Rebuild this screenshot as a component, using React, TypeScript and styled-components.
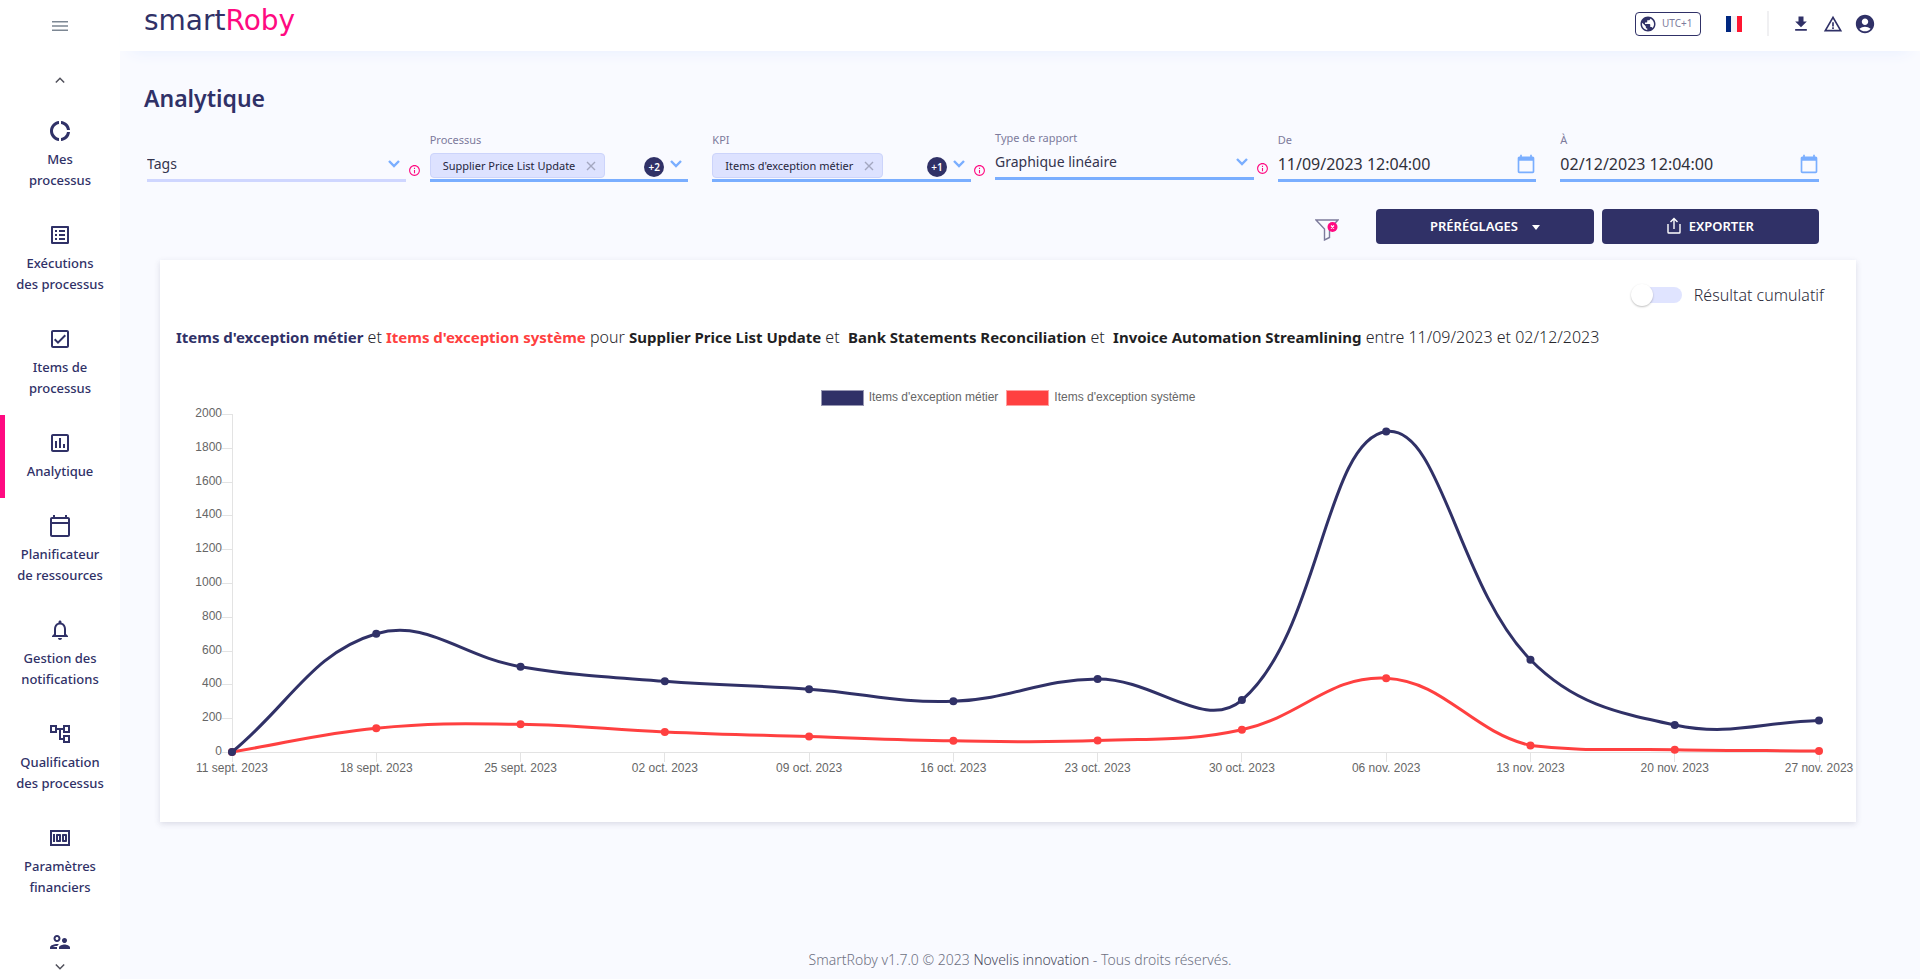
import React, { useLayoutEffect, useRef, useState } from 'react';
import styled, { createGlobalStyle } from 'styled-components';
import {
  MdAccountCircle,
  MdCalendarToday,
  MdDonutLarge,
  MdGetApp,
  MdInfoOutline,
  MdMoney,
  MdNotificationsNone,
  MdOutlineAccountTree,
  MdOutlineCalendarToday,
  MdOutlineCheckBox,
  MdOutlineInsertChartOutlined,
  MdOutlineListAlt,
  MdOutlineSupervisorAccount,
  MdPublic,
  MdWarningAmber,
} from 'react-icons/md';

const navy = '#303167';
const pink = '#ff0a81';
const red = '#ff4040';
const blue = '#7aaeff';
const muted = '#7d7b9c';

const GlobalStyle = createGlobalStyle`
  *, *::before, *::after { box-sizing: border-box; }
  body {
    margin: 0;
    background: #f9faff;
    color: #2b2b3a;
    font-family: "Noto Sans", "Open Sans", sans-serif;
    font-size: 14px;
  }
  button, input, select { font: inherit; color: inherit; }
  button { padding: 0; border: 0; background: none; cursor: pointer; }
  a { color: inherit; text-decoration: none; }
`;

const Shell = styled.div`
  display: flex;
  height: 100vh;
`;

const Sidebar = styled.aside`
  flex: none;
  display: flex;
  flex-direction: column;
  align-items: center;
  width: 120px;
  background: #fff;
`;

const MenuButton = styled.button`
  display: flex;
  margin-top: 18px;
  color: #7c8793;
`;

const ScrollButton = styled.button<{ $up?: boolean }>`
  flex: none;
  display: flex;
  align-items: center;
  justify-content: center;
  width: 24px;
  height: 24px;
  margin: ${(p) => (p.$up ? '34px 0 11px' : '0')};
  color: #4f4f5a;
`;

const NavList = styled.ul`
  flex: 1;
  min-height: 0;
  width: 100%;
  margin: 0;
  padding: 0;
  overflow: hidden;
  list-style: none;
`;

const NavLink = styled.a<{ $active?: boolean }>`
  display: flex;
  flex-direction: column;
  align-items: center;
  gap: 6px;
  padding: 16px 0;
  box-shadow: ${(p) => (p.$active ? `inset 5px 0 ${pink}` : 'none')};
  color: ${navy};
  font-size: 13px;
  font-weight: 500;
  line-height: 21px;
  text-align: center;
  white-space: pre-line;
`;

const Page = styled.div`
  flex: 1;
  min-width: 0;
  display: flex;
  flex-direction: column;
`;

const Header = styled.header`
  display: flex;
  align-items: center;
  justify-content: space-between;
  height: 51px;
  padding: 0 43px 4px 24px;
  background: #fff;
  box-shadow: 0 12px 16px -12px #e6eeff;
`;

const Logo = styled.a`
  color: ${navy};
  font-family: "DejaVu Sans", sans-serif;
  font-size: 28px;
  line-height: 32px;
  padding-bottom: 6px;
`;

const LogoAccent = styled.span`
  color: ${pink};
`;

const HeaderTools = styled.div`
  display: flex;
  align-items: center;
  color: ${navy};
`;

const ZoneButton = styled.button`
  display: flex;
  align-items: center;
  gap: 5px;
  height: 24px;
  width: 66px;
  padding: 0 3px;
  border: 1px solid ${navy};
  border-radius: 4px;
  color: ${navy};
`;

const ZoneText = styled.span`
  color: ${muted};
  font-size: 10px;
  line-height: 16px;
  padding-bottom: 2px;
`;

const Flag = styled.button`
  width: 16px;
  height: 16px;
  margin: 0 25px;
  background: linear-gradient(90deg, #002780 0 33%, #f4f4f6 33% 67%, #ff1530 67%);
`;

const Divider = styled.span`
  width: 2px;
  height: 25px;
  margin-right: 20px;
  background: #f0f0f2;
`;

const ToolButton = styled.button`
  display: flex;
  align-items: center;
  justify-content: center;
  width: 24px;
  height: 24px;
  margin-left: 8px;

  &:first-of-type { margin-left: 0; }
`;

const ToolGroup = styled.div`
  display: flex;
`;

const Main = styled.main`
  display: flex;
  flex-direction: column;
  padding-top: 31px;
`;

const Title = styled.h1`
  margin: 0 24px;
  color: ${navy};
  font-size: 23px;
  font-weight: 600;
  line-height: 32px;
`;

const Filters = styled.form`
  display: grid;
  grid-template-columns: repeat(6, minmax(0, 1fr));
  min-height: 52px;
  margin: 16px 77px 0 27px;
`;

const FilterCell = styled.div<{ $raised?: boolean }>`
  display: flex;
  align-self: ${(p) => (p.$raised ? 'start' : 'end')};
  align-items: flex-end;
`;

const Field = styled.div<{ $empty?: boolean }>`
  flex: 1;
  min-width: 0;
  border-bottom: 3px solid ${(p) => (p.$empty ? '#cfd6ff' : blue)};
`;

const FieldLabel = styled.label`
  display: block;
  height: 16px;
  color: ${muted};
  font-size: 11px;
  line-height: 16px;
`;

const FieldBody = styled.div`
  display: flex;
  align-items: center;
  height: 31px;
  padding-right: 6px;
  color: ${blue};
`;

const SelectInput = styled.select`
  flex: 1;
  min-width: 0;
  padding: 0;
  border: 0;
  appearance: none;
  background: none;
  color: #34344e;
  font-size: 14px;
`;

const DateInput = styled.input`
  flex: 1;
  min-width: 0;
  padding: 0;
  border: 0;
  background: none;
  color: #30303a;
  font-size: 16px;
`;

const DateBody = styled(FieldBody)`
  padding-right: 0;
`;

const IconButton = styled.button`
  display: flex;
  color: inherit;
`;

const Chip = styled.span`
  display: flex;
  align-items: center;
  gap: 11px;
  height: 25px;
  margin: 4px auto 0 0;
  padding: 0 8px 0 12px;
  border: 1px solid #ccd4fb;
  border-radius: 4px;
  background: #dde2ff;
  color: #25253c;
  font-size: 11px;
  white-space: nowrap;
`;

const ChipRemove = styled.button`
  display: flex;
  color: #a3a7c0;
`;

const Count = styled.span`
  display: flex;
  align-items: center;
  justify-content: center;
  width: 20px;
  height: 20px;
  margin: 6px 6px 0 0;
  border-radius: 50%;
  background: ${navy};
  color: #fff;
  font-size: 10px;
  font-weight: 600;
`;

const InfoSlot = styled.span`
  flex: none;
  display: flex;
  justify-content: center;
  width: 24px;
  padding: 0 6px 5px 0;
  color: ${pink};
`;

const Actions = styled.div`
  display: flex;
  justify-content: flex-end;
  align-items: center;
  gap: 8px;
  margin: 27px 101px 0 27px;
`;

const ClearFilters = styled.button`
  display: flex;
  margin: 6px 29px 0 0;
`;

const ActionButton = styled.button`
  display: flex;
  align-items: center;
  justify-content: center;
  gap: 8px;
  flex: 0 0 13%;
  height: 35px;
  padding-bottom: 2px;
  border-radius: 4px;
  background: ${navy};
  color: #fff;
  font-size: 13px;
  font-weight: 600;
  line-height: 20px;
`;

const Caret = styled.span`
  margin: 4px 0 0 6px;
  border: 4px solid transparent;
  border-top: 5px solid #fff;
  border-bottom: 0;
`;

const Card = styled.section`
  margin: 16px 64px 0 40px;
  padding: 24px 0 40px;
  background: #fff;
  box-shadow: 0 2px 6px rgba(60, 60, 100, 0.16);
`;

const ToggleLabel = styled.label`
  display: flex;
  align-items: center;
  justify-content: flex-end;
  gap: 12px;
  height: 22px;
  padding-right: 32px;
  font-size: 16px;
  font-weight: 300;
  line-height: 22px;
`;

const Toggle = styled.input`
  position: relative;
  width: 46px;
  height: 16px;
  margin: 0;
  appearance: none;
  border-radius: 8px;
  background: #e0e4ff;

  &::before {
    content: "";
    position: absolute;
    top: -3px;
    left: -5px;
    width: 22px;
    height: 22px;
    border-radius: 50%;
    background: #fff;
    box-shadow: 0 1px 2px rgba(0, 0, 0, 0.25);
  }

  &:checked::before { left: 29px; }
`;

const Summary = styled.p`
  margin: 19px 16px 0;
  color: #26262c;
  font-size: 16px;
  font-weight: 300;
  line-height: 24px;
  white-space: pre-wrap;
`;

const Strong = styled.strong<{ $color?: string }>`
  color: ${(p) => p.$color ?? '#1f1f24'};
  font-size: 15px;
  font-weight: 700;
`;

const Legend = styled.div`
  display: flex;
  justify-content: center;
  gap: 8px;
  margin-top: 41px;
  color: #666;
  font-family: "Liberation Sans", Arial, sans-serif;
  font-size: 12px;
  line-height: 14px;
`;

const LegendItem = styled.span`
  display: flex;
  gap: 5px;
`;

const Swatch = styled.span<{ $color: string }>`
  width: 43px;
  height: 16px;
  border: 1px solid rgba(255, 255, 255, 0.5);
  background: ${(p) => p.$color};
`;

const ChartSvg = styled.svg`
  display: block;
  width: 100%;
  height: 376px;
  font-family: "Liberation Sans", Arial, sans-serif;
  font-size: 12px;
  fill: #666;
`;

const Footer = styled.footer`
  margin-top: auto;
  padding-bottom: 9px;
  color: #6e7182;
  font-size: 14px;
  font-weight: 300;
  line-height: 20px;
  text-align: center;
`;

const FooterLink = styled.a`
  color: #4a4c60;
`;

const navItems = [
  { label: 'Mes\nprocessus', Icon: MdDonutLarge },
  { label: 'Exécutions\ndes processus', Icon: MdOutlineListAlt },
  { label: 'Items de\nprocessus', Icon: MdOutlineCheckBox },
  { label: 'Analytique', Icon: MdOutlineInsertChartOutlined, active: true },
  { label: 'Planificateur\nde ressources', Icon: MdOutlineCalendarToday },
  { label: 'Gestion des\nnotifications', Icon: MdNotificationsNone },
  { label: 'Qualification\ndes processus', Icon: MdOutlineAccountTree },
  { label: 'Paramètres\nfinanciers', Icon: MdMoney },
];

const dates = [
  '11 sept. 2023', '18 sept. 2023', '25 sept. 2023', '02 oct. 2023',
  '09 oct. 2023', '16 oct. 2023', '23 oct. 2023', '30 oct. 2023',
  '06 nov. 2023', '13 nov. 2023', '20 nov. 2023', '27 nov. 2023',
];

const series = [
  {
    name: "Items d'exception système",
    color: red,
    values: [0, 141, 164, 119, 91, 66, 68, 132, 437, 38, 14, 6],
  },
  {
    name: "Items d'exception métier",
    color: navy,
    values: [0, 700, 505, 418, 372, 300, 432, 307, 1896, 546, 160, 187],
  },
];

type Point = { x: number; y: number };

/* Cubic spline through the points; handles follow the neighbours' chord. */
function splinePath(points: Point[], top: number, bottom: number) {
  const tension = 0.4;
  const clamp = (y: number) => Math.min(bottom, Math.max(top, y));
  const handles = points.map((p, i) => {
    const prev = points[i - 1] ?? p;
    const next = points[i + 1] ?? p;
    const before = Math.hypot(p.x - prev.x, p.y - prev.y);
    const after = Math.hypot(next.x - p.x, next.y - p.y);
    const a = (tension * before) / (before + after);
    const b = (tension * after) / (before + after);
    const dx = next.x - prev.x;
    const dy = next.y - prev.y;
    return {
      inX: p.x - a * dx, inY: clamp(p.y - a * dy),
      outX: p.x + b * dx, outY: clamp(p.y + b * dy),
    };
  });
  return points
    .map((p, i) =>
      i === 0
        ? `M${p.x},${p.y}`
        : `C${handles[i - 1].outX},${handles[i - 1].outY} ${handles[i].inX},${handles[i].inY} ${p.x},${p.y}`)
    .join(' ');
}

function LineChart() {
  const ref = useRef<SVGSVGElement>(null);
  const [width, setWidth] = useState(1696);

  useLayoutEffect(() => {
    const node = ref.current;
    if (!node) return;
    const update = () => setWidth(node.getBoundingClientRect().width);
    update();
    const observer = new ResizeObserver(update);
    observer.observe(node);
    return () => observer.disconnect();
  }, []);

  const left = 72;
  const right = width - 37;
  const top = 8;
  const bottom = 346;
  const x = (i: number) => left + ((right - left) * i) / (dates.length - 1);
  const y = (v: number) => bottom - ((bottom - top) * v) / 2000;
  const ticks = Array.from({ length: 11 }, (_, i) => i * 200);

  return (
    <ChartSvg ref={ref} role="img" aria-label="Items d'exception par semaine">
      <g stroke="#e3e3e3" shapeRendering="crispEdges">
        <line x1={left} x2={left} y1={top} y2={bottom + 10} />
        <line x1={left - 10} x2={right} y1={bottom} y2={bottom} />
        {ticks.map((t) => (
          <line key={t} x1={left - 10} x2={left} y1={Math.round(y(t))} y2={Math.round(y(t))} />
        ))}
        {dates.map((d, i) => (
          <line key={d} x1={x(i)} x2={x(i)} y1={bottom} y2={bottom + 10} />
        ))}
      </g>
      {ticks.map((t) => (
        <text key={t} x={left - 10} y={Math.round(y(t)) + 3} textAnchor="end">{t}</text>
      ))}
      {dates.map((d, i) => (
        <text key={d} x={x(i)} y={bottom + 20} textAnchor="middle">{d}</text>
      ))}
      {series.map((s) => {
        const points = s.values.map((v, i) => ({ x: x(i), y: y(v) }));
        return (
          <g key={s.name} fill={s.color}>
            <path d={splinePath(points, top, bottom)} fill="none" stroke={s.color} strokeWidth="3" />
            {points.map((p) => (
              <circle key={p.x} cx={p.x} cy={p.y} r="4" />
            ))}
          </g>
        );
      })}
    </ChartSvg>
  );
}

function Chevron({ width = 12, up = false, stroke = 2 }: { width?: number; up?: boolean; stroke?: number }) {
  return (
    <svg width={width} height="8" viewBox="0 0 12 8" fill="none" stroke="currentColor" strokeWidth={stroke} aria-hidden="true">
      <path d={up ? 'M1 7l5-5 5 5' : 'M1 1l5 5 5-5'} />
    </svg>
  );
}

function Info() {
  return (
    <InfoSlot>
      <MdInfoOutline size={13} />
    </InfoSlot>
  );
}

function ChipField({ label, chip, more }: { label: string; chip: string; more: string }) {
  return (
    <Field role="group" aria-label={label}>
      <FieldLabel as="span">{label}</FieldLabel>
      <FieldBody>
        <Chip>
          {chip}
          <ChipRemove type="button" aria-label={`Retirer ${chip}`}>
            <svg width="10" height="10" viewBox="0 0 10 10" stroke="currentColor" strokeWidth="1.4">
              <path d="M1 1l8 8M9 1l-8 8" />
            </svg>
          </ChipRemove>
        </Chip>
        <Count>{more}</Count>
        <IconButton type="button" aria-label={`Ouvrir ${label}`}>
          <Chevron stroke={2.4} />
        </IconButton>
      </FieldBody>
    </Field>
  );
}

function DateField({ id, label, value }: { id: string; label: string; value: string }) {
  return (
    <Field>
      <FieldLabel htmlFor={id}>{label}</FieldLabel>
      <DateBody>
        <DateInput id={id} defaultValue={value} />
        <IconButton type="button" aria-label="Choisir une date">
          <MdCalendarToday size={20} />
        </IconButton>
      </DateBody>
    </Field>
  );
}

export default function App() {
  return (
    <>
      <GlobalStyle />
      <Shell>
        <Sidebar>
          <MenuButton aria-label="Menu">
            <svg width="16" height="16" viewBox="0 0 16 16" stroke="currentColor" strokeWidth="1.5">
              <path d="M0 3.7h16M0 8h16M0 12.3h16" />
            </svg>
          </MenuButton>
          <ScrollButton $up aria-label="Monter">
            <Chevron width={10} up stroke={1.8} />
          </ScrollButton>
          <NavList>
            {navItems.map(({ label, Icon, active }) => (
              <li key={label}>
                <NavLink href="#" $active={active}>
                  <Icon size={24} />
                  {label}
                </NavLink>
              </li>
            ))}
            <li>
              <NavLink href="#" aria-label="Utilisateurs">
                <MdOutlineSupervisorAccount size={24} />
              </NavLink>
            </li>
          </NavList>
          <ScrollButton aria-label="Descendre">
            <Chevron width={10} stroke={1.8} />
          </ScrollButton>
        </Sidebar>

        <Page>
          <Header>
            <Logo href="#">
              smart<LogoAccent>Roby</LogoAccent>
            </Logo>
            <HeaderTools>
              <ZoneButton>
                <MdPublic size={18} />
                <ZoneText>UTC+1</ZoneText>
              </ZoneButton>
              <Flag aria-label="Français" />
              <Divider />
              <ToolGroup>
                <ToolButton aria-label="Télécharger"><MdGetApp size={20} /></ToolButton>
                <ToolButton aria-label="Alertes"><MdWarningAmber size={20} /></ToolButton>
                <ToolButton aria-label="Compte"><MdAccountCircle size={22} /></ToolButton>
              </ToolGroup>
            </HeaderTools>
          </Header>

          <Main>
            <Title>Analytique</Title>

            <Filters>
              <FilterCell>
                <Field $empty>
                  <FieldBody>
                    <SelectInput aria-label="Tags">
                      <option>Tags</option>
                    </SelectInput>
                    <Chevron stroke={2.4} />
                  </FieldBody>
                </Field>
                <Info />
              </FilterCell>
              <FilterCell>
                <ChipField label="Processus" chip="Supplier Price List Update" more="+2" />
                <InfoSlot />
              </FilterCell>
              <FilterCell>
                <ChipField label="KPI" chip="Items d'exception métier" more="+1" />
                <Info />
              </FilterCell>
              <FilterCell $raised>
                <Field>
                  <FieldLabel htmlFor="report">Type de rapport</FieldLabel>
                  <FieldBody>
                    <SelectInput id="report">
                      <option>Graphique linéaire</option>
                    </SelectInput>
                    <Chevron stroke={2.4} />
                  </FieldBody>
                </Field>
                <Info />
              </FilterCell>
              <FilterCell>
                <DateField id="from" label="De" value="11/09/2023 12:04:00" />
                <InfoSlot />
              </FilterCell>
              <FilterCell>
                <DateField id="to" label="À" value="02/12/2023 12:04:00" />
                <InfoSlot />
              </FilterCell>
            </Filters>

            <Actions>
              <ClearFilters aria-label="Effacer les filtres">
                <svg width="24" height="22" viewBox="0 0 24 22" fill="none">
                  <path d="M1 1h22l-8.500 9v8.500L9.500 21V10z" stroke="#7d7b9c" strokeWidth="1.4" />
                  <circle cx="17.500" cy="8" r="5" fill={pink} />
                  <path d="M16 6.500l3 3M19 6.500l-3 3" stroke="#fff" strokeWidth="1.3" />
                </svg>
              </ClearFilters>
              <ActionButton>
                PRÉRÉGLAGES
                <Caret />
              </ActionButton>
              <ActionButton>
                <svg width="14" height="17" viewBox="0 0 14 17" fill="none" stroke="currentColor" strokeWidth="1.4">
                  <path d="M1 7v8.200q0 .8.8.8h10.400q.8 0 .8-.8V7M7 12V1.500M3.500 5L7 1.500 10.500 5" />
                </svg>
                EXPORTER
              </ActionButton>
            </Actions>

            <Card>
              <ToggleLabel>
                <Toggle type="checkbox" role="switch" />
                Résultat cumulatif
              </ToggleLabel>
              <Summary>
                <Strong $color={navy}>Items d'exception métier</Strong>
                {' et '}
                <Strong $color={red}>Items d'exception système</Strong>
                {' pour '}
                <Strong>Supplier Price List Update</Strong>
                {' et  '}
                <Strong>Bank Statements Reconciliation</Strong>
                {' et  '}
                <Strong>Invoice Automation Streamlining</Strong>
                {' entre 11/09/2023 et 02/12/2023'}
              </Summary>
              <Legend>
                {[...series].reverse().map((s) => (
                  <LegendItem key={s.name}>
                    <Swatch $color={s.color} />
                    {s.name}
                  </LegendItem>
                ))}
              </Legend>
              <LineChart />
            </Card>
          </Main>

          <Footer>
            SmartRoby v1.7.0 © 2023 <FooterLink href="#">Novelis innovation</FooterLink> - Tous droits réservés.
          </Footer>
        </Page>
      </Shell>
    </>
  );
}
